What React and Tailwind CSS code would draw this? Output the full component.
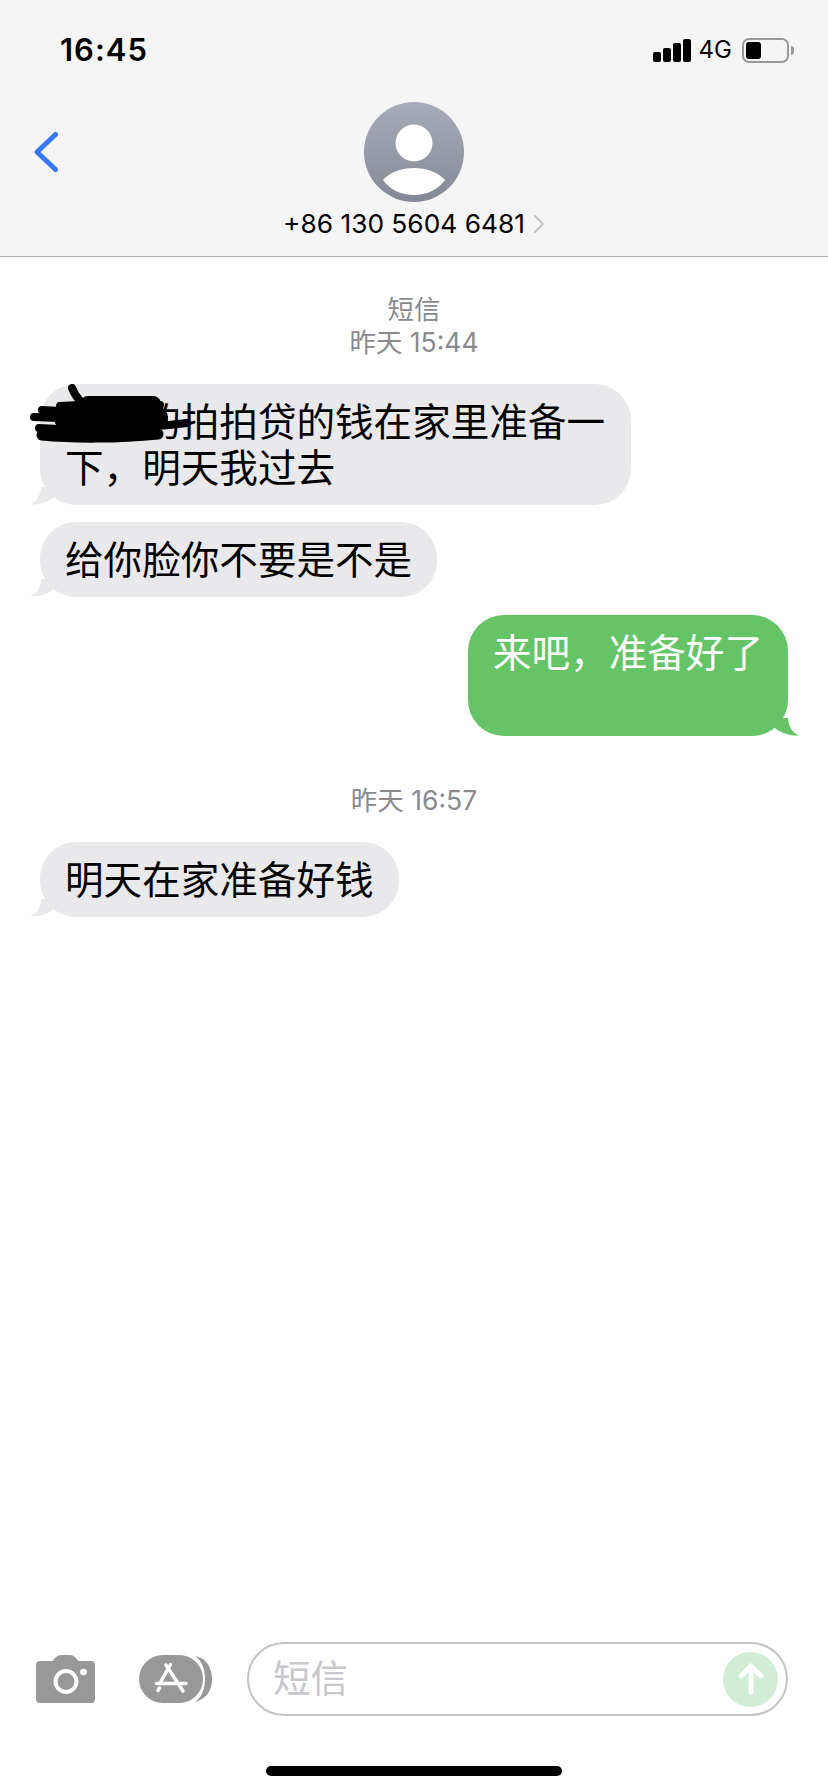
const font = "font-['Inter','Noto_Sans_CJK_SC',sans-serif]";

const Tail = ({ color, side }) => (
  <svg
    viewBox="0 0 30 18"
    className={`absolute bottom-0 w-[30px] h-[18px] ${side === "right" ? "right-[-13px]" : "left-[-12px] -scale-x-100"}`}
  >
    <path d="M17 0C17.500 8 21 15 28 17.500 21 18 11 16 4 10L0 0Z" fill={color} />
  </svg>
);

const Bubble = ({ children, mine, className = "" }) => (
  <div
    className={`relative rounded-[36px] px-[25px] pt-[15px] pb-[14px] text-[38.6px] leading-[46px] ${
      mine ? "self-end bg-[#65c466] text-white" : "self-start bg-[#e9e9eb] text-black"
    } ${className}`}
  >
    {children}
    <Tail color={mine ? "#65c466" : "#e9e9eb"} side={mine ? "right" : "left"} />
  </div>
);

const Stamp = ({ children, className = "" }) => (
  <div className={`text-center text-[26.5px] leading-[33px] text-[#8a8a8e] ${className}`}>{children}</div>
);

const StatusBar = () => (
  <div className="h-[100px] flex items-center justify-between pl-[60px] pr-[34px]">
    <span className="text-[31px] font-semibold tracking-[1px] text-black">16:45</span>
    <div className="flex items-center gap-[8px]">
      <div className="flex items-end gap-[2px] h-[23px]">
        <div className="w-[8px] h-[10px] rounded-[2px] bg-black" />
        <div className="w-[8px] h-[14px] rounded-[2px] bg-black" />
        <div className="w-[8px] h-[19px] rounded-[2px] bg-black" />
        <div className="w-[8px] h-[23px] rounded-[2px] bg-black" />
      </div>
      <span className="text-[24px] leading-[24px] text-black">4G</span>
      <div className="flex items-center ml-[2px]">
        <div className="w-[47px] h-[25px] rounded-[7px] border-2 border-[#9a9a9a] p-[2px]">
          <div className="w-[15px] h-full rounded-[3px] bg-black" />
        </div>
        <div className="w-[3px] h-[9px] ml-[2px] rounded-r-[3px] bg-[#9a9a9a]" />
      </div>
    </div>
  </div>
);

const NavBar = () => (
  <div className="grid grid-cols-[1fr_auto_1fr] pt-[2px]">
    <div className="pl-[33px] pt-[29px]">
      <svg width="26" height="42" viewBox="0 0 26 42" fill="none">
        <path d="M22.500 3.500 4 21l18.500 17.500" stroke="#3478f6" strokeWidth="5" strokeLinecap="round" strokeLinejoin="round" />
      </svg>
    </div>
    <div className="flex flex-col items-center">
      <svg width="100" height="100" viewBox="0 0 100 100">
        <defs>
          <linearGradient id="avatar" x1="0" y1="0" x2="0" y2="1">
            <stop offset="0" stopColor="#a8acb8" />
            <stop offset="1" stopColor="#858995" />
          </linearGradient>
        </defs>
        <circle cx="50" cy="50" r="50" fill="url(#avatar)" />
        <circle cx="50" cy="41" r="18.500" fill="#fff" />
        <path d="M19 78C26 70 38 66 50 66 62 66 74 70 81 78 74 88 62 93 50 93 38 93 26 88 19 78Z" fill="#fff" />
      </svg>
      <div className="flex items-center gap-[8px] h-[42px] mt-[1px]">
        <span className="text-[26.300px] text-black">+86 130 5604 6481</span>
        <svg width="12" height="20" viewBox="0 0 12 20" fill="none">
          <path d="M2 2l8 8-8 8" stroke="#c4c4c6" strokeWidth="2" strokeLinecap="round" strokeLinejoin="round" />
        </svg>
      </div>
    </div>
    <div />
  </div>
);

// black marker drawn over the first characters of the message
const Scribble = () => (
  <svg viewBox="0 0 170 62" className="absolute left-[-10px] top-[0px] w-[170px] h-[62px]" fill="none">
    <g stroke="#000" strokeLinecap="round" strokeLinejoin="round">
      <path d="M42 4c2 5 5 10 9 14" strokeWidth="8" />
      <path d="M30 22c30-2 70-2 100-1" strokeWidth="8" />
      <path d="M58 20h65" strokeWidth="16" />
      <path d="M36 34H126" strokeWidth="24" />
      <path d="M12 26c30 2 70 3 112 2" strokeWidth="8" />
      <path d="M4 33c40 2 90 3 122 2" strokeWidth="8" />
      <path d="M9 44c40 3 100 1 148-5" strokeWidth="8" />
      <path d="M12 51c30 3 76 3 116-1" strokeWidth="11" />
    </g>
  </svg>
);

const Camera = () => (
  <svg width="59" height="48" viewBox="0 0 59 48">
    <path
      d="M4 6h12.500l3-3.500Q21.500 0 24.500 0h10q3 0 5 2.500l3 3.500H55q4 0 4 4v34q0 4-4 4H4q-4 0-4-4V10q0-4 4-4Z"
      fill="#989898"
    />
    <circle cx="30" cy="26.500" r="10.500" fill="none" stroke="#fff" strokeWidth="4" />
    <circle cx="47.500" cy="17" r="3.300" fill="#fff" />
  </svg>
);

const AppStore = () => (
  <svg width="73" height="48" viewBox="0 0 73 48">
    <path d="M56 1c11 2 17 11 17 23s-6 20-17 23c7-5 10-13 10-23S63 6 56 1Z" fill="#989898" />
    <rect x="0" y="0" width="64" height="48" rx="24" fill="#989898" />
    <g stroke="#fff" strokeWidth="3.500" strokeLinecap="round" fill="none">
      <path d="M31.500 9.500 21 28" />
      <path d="M27 10 44 36" />
      <path d="M17.500 28.500H47" />
      <path d="M20.500 33 19 35.500" />
    </g>
  </svg>
);

const InputBar = () => (
  <div className="flex items-center pl-[36px] pr-[40px]">
    <Camera />
    <div className="ml-[44px]">
      <AppStore />
    </div>
    <div className="ml-[35px] flex-1 h-[74px] rounded-[37px] border-2 border-[#c4c4c6] flex items-center justify-between pl-[24px] pr-[8px]">
      <span className="text-[37.500px] text-[#c7c7cc]">短信</span>
      <div className="w-[55px] h-[55px] rounded-full bg-[#d2edd6] flex items-center justify-center">
        <svg width="28" height="32" viewBox="0 0 28 32" fill="none">
          <path d="M14 29V4M4 13l10-10 10 10" stroke="#fff" strokeWidth="5" strokeLinecap="round" strokeLinejoin="round" />
        </svg>
      </div>
    </div>
  </div>
);

export default function App() {
  return (
    <div className={`w-[828px] h-[1792px] bg-white flex flex-col overflow-hidden ${font}`}>
      <header className="h-[257px] shrink-0 bg-[#f5f5f5] border-b border-[#b2b2b2]">
        <StatusBar />
        <NavBar />
      </header>

      <main className="flex-1 flex flex-col px-[40px] pt-[36px]">
        <Stamp>短信</Stamp>
        <Stamp>昨天 15:44</Stamp>

        <Bubble className="w-[591px] mt-[25px]">
          某某的拍拍贷的钱在家里准备一下，明天我过去
          <Scribble />
        </Bubble>
        <Bubble className="mt-[17px]">给你脸你不要是不是</Bubble>
        <Bubble mine className="mt-[18px]">
          来吧，准备好了
          <br />
          &nbsp;
        </Bubble>

        <Stamp className="mt-[48px]">昨天 16:57</Stamp>
        <Bubble className="mt-[25px]">明天在家准备好钱</Bubble>
      </main>

      <footer className="h-[150px] shrink-0 flex flex-col">
        <InputBar />
        <div className="mt-auto mb-[16px] self-center w-[296px] h-[10px] rounded-full bg-black" />
      </footer>
    </div>
  );
}
